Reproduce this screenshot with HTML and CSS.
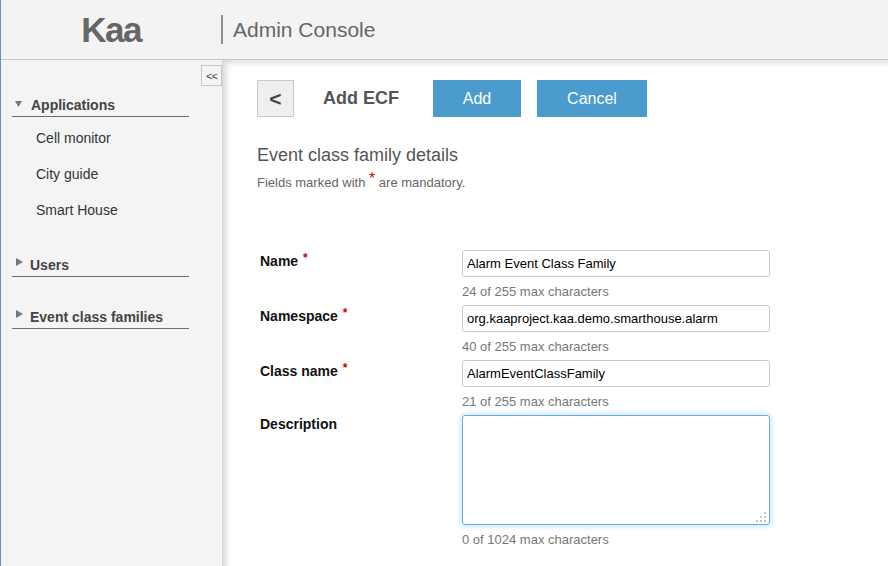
FILE: index.html
```html
<!DOCTYPE html>
<html>
<head>
<meta charset="utf-8">
<title>Kaa Admin Console</title>
<link rel="stylesheet" href="styles.css">
</head>
<body>
<header class="topbar">
  <div class="logo">Kaa</div>
  <div class="divider"></div>
  <div class="app-title">Admin Console</div>
</header>
<div class="layout">
  <aside class="sidebar">
    <div class="collapse-row"><button class="collapse-btn">&lt;&lt;</button></div>
    <nav class="nav">
      <div class="nav-section expanded">
        <div class="nav-header"><svg class="tri" width="8" height="8" viewBox="0 0 8 8"><path d="M0 1 H7 L3.5 7 Z" fill="#777"/></svg>Applications</div>
        <ul class="nav-list">
          <li>Cell monitor</li>
          <li>City guide</li>
          <li>Smart House</li>
        </ul>
      </div>
      <div class="nav-section">
        <div class="nav-header"><svg class="tri tri-right" width="9" height="9" viewBox="0 0 9 9"><path d="M1 0 L8 4 L1 8 Z" fill="#777"/></svg>Users</div>
      </div>
      <div class="nav-section">
        <div class="nav-header"><svg class="tri tri-right" width="9" height="9" viewBox="0 0 9 9"><path d="M1 0 L8 4 L1 8 Z" fill="#777"/></svg>Event class families</div>
      </div>
    </nav>
  </aside>
  <main class="content">
    <div class="toolbar">
      <button class="back-btn">&lt;</button>
      <div class="page-title">Add ECF</div>
      <button class="btn-primary btn-add">Add</button>
      <button class="btn-primary btn-cancel">Cancel</button>
    </div>
    <h2 class="section-title">Event class family details</h2>
    <div class="mandatory-note">Fields marked with <span class="req">*</span> are mandatory.</div>
    <div class="form">
      <label class="field-label">Name <span class="req">*</span></label>
      <div class="field">
        <input class="text-input" type="text" value="Alarm Event Class Family">
        <div class="hint">24 of 255 max characters</div>
      </div>
      <label class="field-label">Namespace <span class="req">*</span></label>
      <div class="field">
        <input class="text-input" type="text" value="org.kaaproject.kaa.demo.smarthouse.alarm">
        <div class="hint">40 of 255 max characters</div>
      </div>
      <label class="field-label">Class name <span class="req">*</span></label>
      <div class="field">
        <input class="text-input" type="text" value="AlarmEventClassFamily">
        <div class="hint">21 of 255 max characters</div>
      </div>
      <label class="field-label field-label-top">Description</label>
      <div class="field">
        <div class="textarea-wrap">
          <textarea class="text-area"></textarea>
          <svg class="grip" width="12" height="12" viewBox="0 0 12 12"><g fill="#c4c4c4"><rect x="9" y="1" width="2" height="2"/><rect x="5" y="5" width="2" height="2"/><rect x="9" y="5" width="2" height="2"/><rect x="1" y="9" width="2" height="2"/><rect x="5" y="9" width="2" height="2"/><rect x="9" y="9" width="2" height="2"/></g></svg>
        </div>
        <div class="hint">0 of 1024 max characters</div>
      </div>
    </div>
  </main>
</div>
</body>
</html>
```

FILE: styles.css
```css
* { box-sizing: border-box; }
html, body { height: 100%; }
body {
  margin: 0;
  border-left: 1px solid #6f8fb4;
  font-family: "Liberation Sans", Arial, sans-serif;
  color: #333;
  background: #fff;
  overflow: hidden;
}
.topbar {
  height: 60px;
  background: #f3f3f3;
  border-bottom: 1px solid #c6c6c6;
  display: flex;
  align-items: center;
}
.logo {
  width: 220px;
  text-align: center;
  font-size: 35px;
  font-weight: bold;
  letter-spacing: -1.5px;
  color: #666;
  padding-top: 1px;
}
.divider {
  width: 2px;
  height: 29px;
  background: #8f8f8f;
}
.app-title {
  margin-left: 10px;
  font-size: 21px;
  color: #666;
}
.layout {
  display: flex;
  height: calc(100% - 60px);
}
.sidebar {
  width: 221px;
  flex: none;
  background: #f4f4f4;
  padding-top: 5px;
}
.collapse-row {
  display: flex;
  justify-content: flex-end;
}
.collapse-btn {
  width: 21px;
  height: 21px;
  padding: 0;
  border: 1px solid #c8c8c8;
  background: #f4f4f4;
  font-family: "Liberation Sans", Arial, sans-serif;
  font-size: 11px;
  color: #445;
  letter-spacing: -1px;
}
.nav {
  margin-top: 11px;
  padding-left: 11px;
}
.nav-section { width: 177px; }
.nav-section + .nav-section { margin-top: 32px; }
.nav-section.expanded { margin-bottom: -3px; }
.nav-header {
  font-size: 14px;
  line-height: 17px;
  font-weight: bold;
  color: #444;
  padding-bottom: 2px;
  border-bottom: 1px solid #6e6e6e;
  display: flex;
  align-items: center;
}
.tri {
  margin-left: 3px;
  margin-right: 8px;
  position: relative;
  top: -2px;
}
.tri-right {
  margin-right: 6px;
  top: -3px;
}
.nav-list {
  list-style: none;
  margin: 0;
  padding: 3px 0 0 24px;
}
.nav-list li {
  height: 36px;
  line-height: 36px;
  font-size: 14px;
  color: #333;
}
.content {
  flex: 1;
  background: #fff;
  border-left: 1px solid #d6d6d6;
  box-shadow: inset 7px 6px 7px -4px rgba(0,0,0,0.16);
  padding: 20px 0 0 34px;
}
.toolbar {
  display: flex;
  align-items: center;
  height: 37px;
}
.back-btn {
  width: 37px;
  height: 37px;
  padding: 0;
  background: #efefef;
  border: 1px solid #c9c9c9;
  font-family: "Liberation Sans", Arial, sans-serif;
  font-size: 21px;
  font-weight: bold;
  color: #444;
}
.page-title {
  margin-left: 29px;
  width: 110px;
  font-size: 18px;
  font-weight: bold;
  color: #555;
}
.btn-primary {
  height: 37px;
  border: none;
  background: #4b9bce;
  color: #fff;
  font-family: "Liberation Sans", Arial, sans-serif;
  font-size: 16px;
  padding: 0;
}
.btn-add { width: 88px; }
.btn-cancel { width: 110px; margin-left: 16px; }
.section-title {
  margin: 27px 0 0;
  font-size: 18px;
  line-height: 22px;
  font-weight: normal;
  color: #555;
}
.mandatory-note {
  margin-top: 8px;
  font-size: 13px;
  line-height: 16px;
  color: #666;
}
.req {
  color: #cc0000;
  position: relative;
}
.mandatory-note .req { font-size: 16px; top: -3px; }
.form {
  margin-top: 59px;
  display: grid;
  grid-template-columns: 205px 308px;
  row-gap: 5px;
}
.field-label {
  padding: 3px 0 0 3px;
  font-size: 14px;
  line-height: 17px;
  font-weight: bold;
  color: #111;
}
.field-label-top { padding-top: 1px; }
.field-label .req { font-size: 12px; top: -4px; margin-left: 1px; }
.text-input {
  display: block;
  width: 308px;
  height: 27px;
  border: 1px solid #cbcbcb;
  border-radius: 3px;
  padding: 0 4px;
  font-family: "Liberation Sans", Arial, sans-serif;
  font-size: 13px;
  color: #000;
  background: #fff;
  outline: none;
}
.hint {
  margin-top: 7px;
  font-size: 13px;
  line-height: 16px;
  color: #777;
}
.textarea-wrap {
  position: relative;
  width: 308px;
  height: 110px;
}
.text-area {
  display: block;
  width: 308px;
  height: 110px;
  border: 1px solid #66afe9;
  border-radius: 3px;
  box-shadow: 0 0 6px rgba(102,175,233,0.55);
  resize: none;
  outline: none;
  font-family: "Liberation Sans", Arial, sans-serif;
  font-size: 13px;
}
.grip {
  position: absolute;
  right: 3px;
  bottom: 2px;
}
```
